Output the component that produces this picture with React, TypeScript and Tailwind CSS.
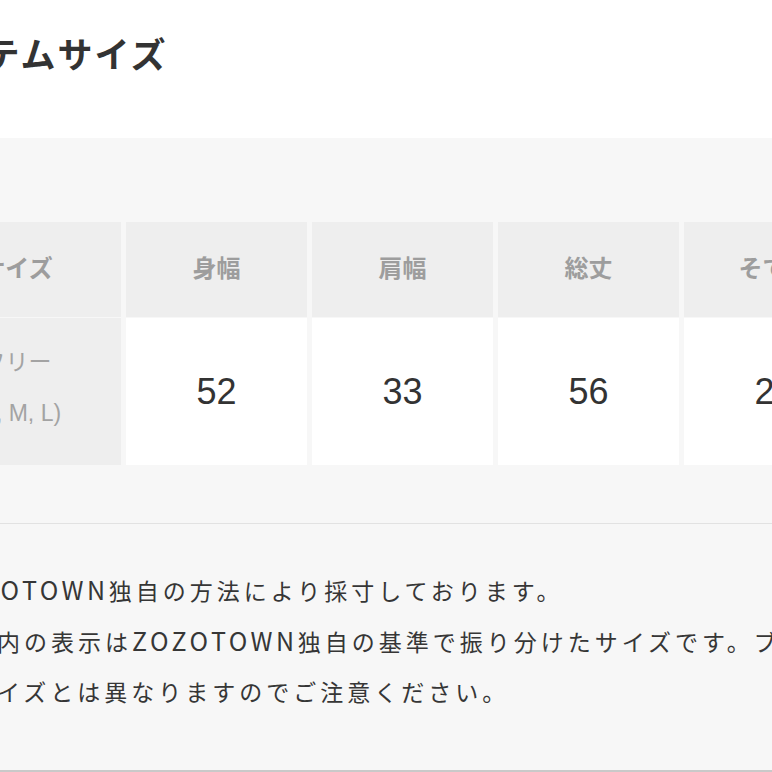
import React from 'react';

const headers = ['サイズ', '身幅', '肩幅', '総丈', 'そで丈'];
const values = ['52', '33', '56', '23'];

const Zozo = () => <span className="text-[25px] tracking-[3.5px]">ZOZOTOWN</span>;

const App: React.FC = () => {
  return (
    <div className="w-[772px] h-[772px] overflow-hidden bg-white font-['Noto_Sans_CJK_JP',sans-serif] text-[#333]">
      <div className="ml-[-87px] w-[1100px]">
        {/* title */}
        <div className="h-[138px] pt-[35px]">
          <h2 className="text-[35px] leading-[35px] font-bold tracking-[2px] text-[#333]">アイテムサイズ</h2>
        </div>

        {/* table + notes */}
        <div className="h-[634px] bg-[#f7f7f7] border-b-2 border-[#c9c9c9] pt-[84px]">
          <div className="grid grid-cols-[208px_181px_181px_181px_181px] grid-rows-[95px_147px] gap-x-[5px] gap-y-[1px]">
            {headers.map(h => (
              <div
                key={h}
                className="bg-[#eeeeee] flex items-center justify-center pb-[5px] text-[24px] font-bold text-[#9d9d9d]"
              >
                {h}
              </div>
            ))}
            <div className="bg-[#eeeeee] flex flex-col items-center justify-center text-[23px] leading-[53px] text-[#a3a3a3] pb-[10px]">
              <span>フリー</span>
              <span className="font-['Liberation_Sans',sans-serif]">(S, M, L)</span>
            </div>
            {values.map((v, i) => (
              <div
                key={i}
                className="bg-white flex items-center justify-center text-[36px] text-[#333] font-['Liberation_Sans',sans-serif]"
              >
                {v}
              </div>
            ))}
          </div>

          <div className="mt-[58px] h-px bg-[#e2e2e2]" />

          <div className="pt-[40px] pl-[3px] text-[23px] leading-[50px] tracking-[4px] text-[#363636]">
            <p className="whitespace-nowrap">※<Zozo />独自の方法により採寸しております。</p>
            <p className="whitespace-nowrap">※（）内の表示は<Zozo />独自の基準で振り分けたサイズです。ブランドの定める</p>
            <p className="whitespace-nowrap">めるサイズとは異なりますのでご注意ください。</p>
          </div>
        </div>
      </div>
    </div>
  );
};

export default App;
